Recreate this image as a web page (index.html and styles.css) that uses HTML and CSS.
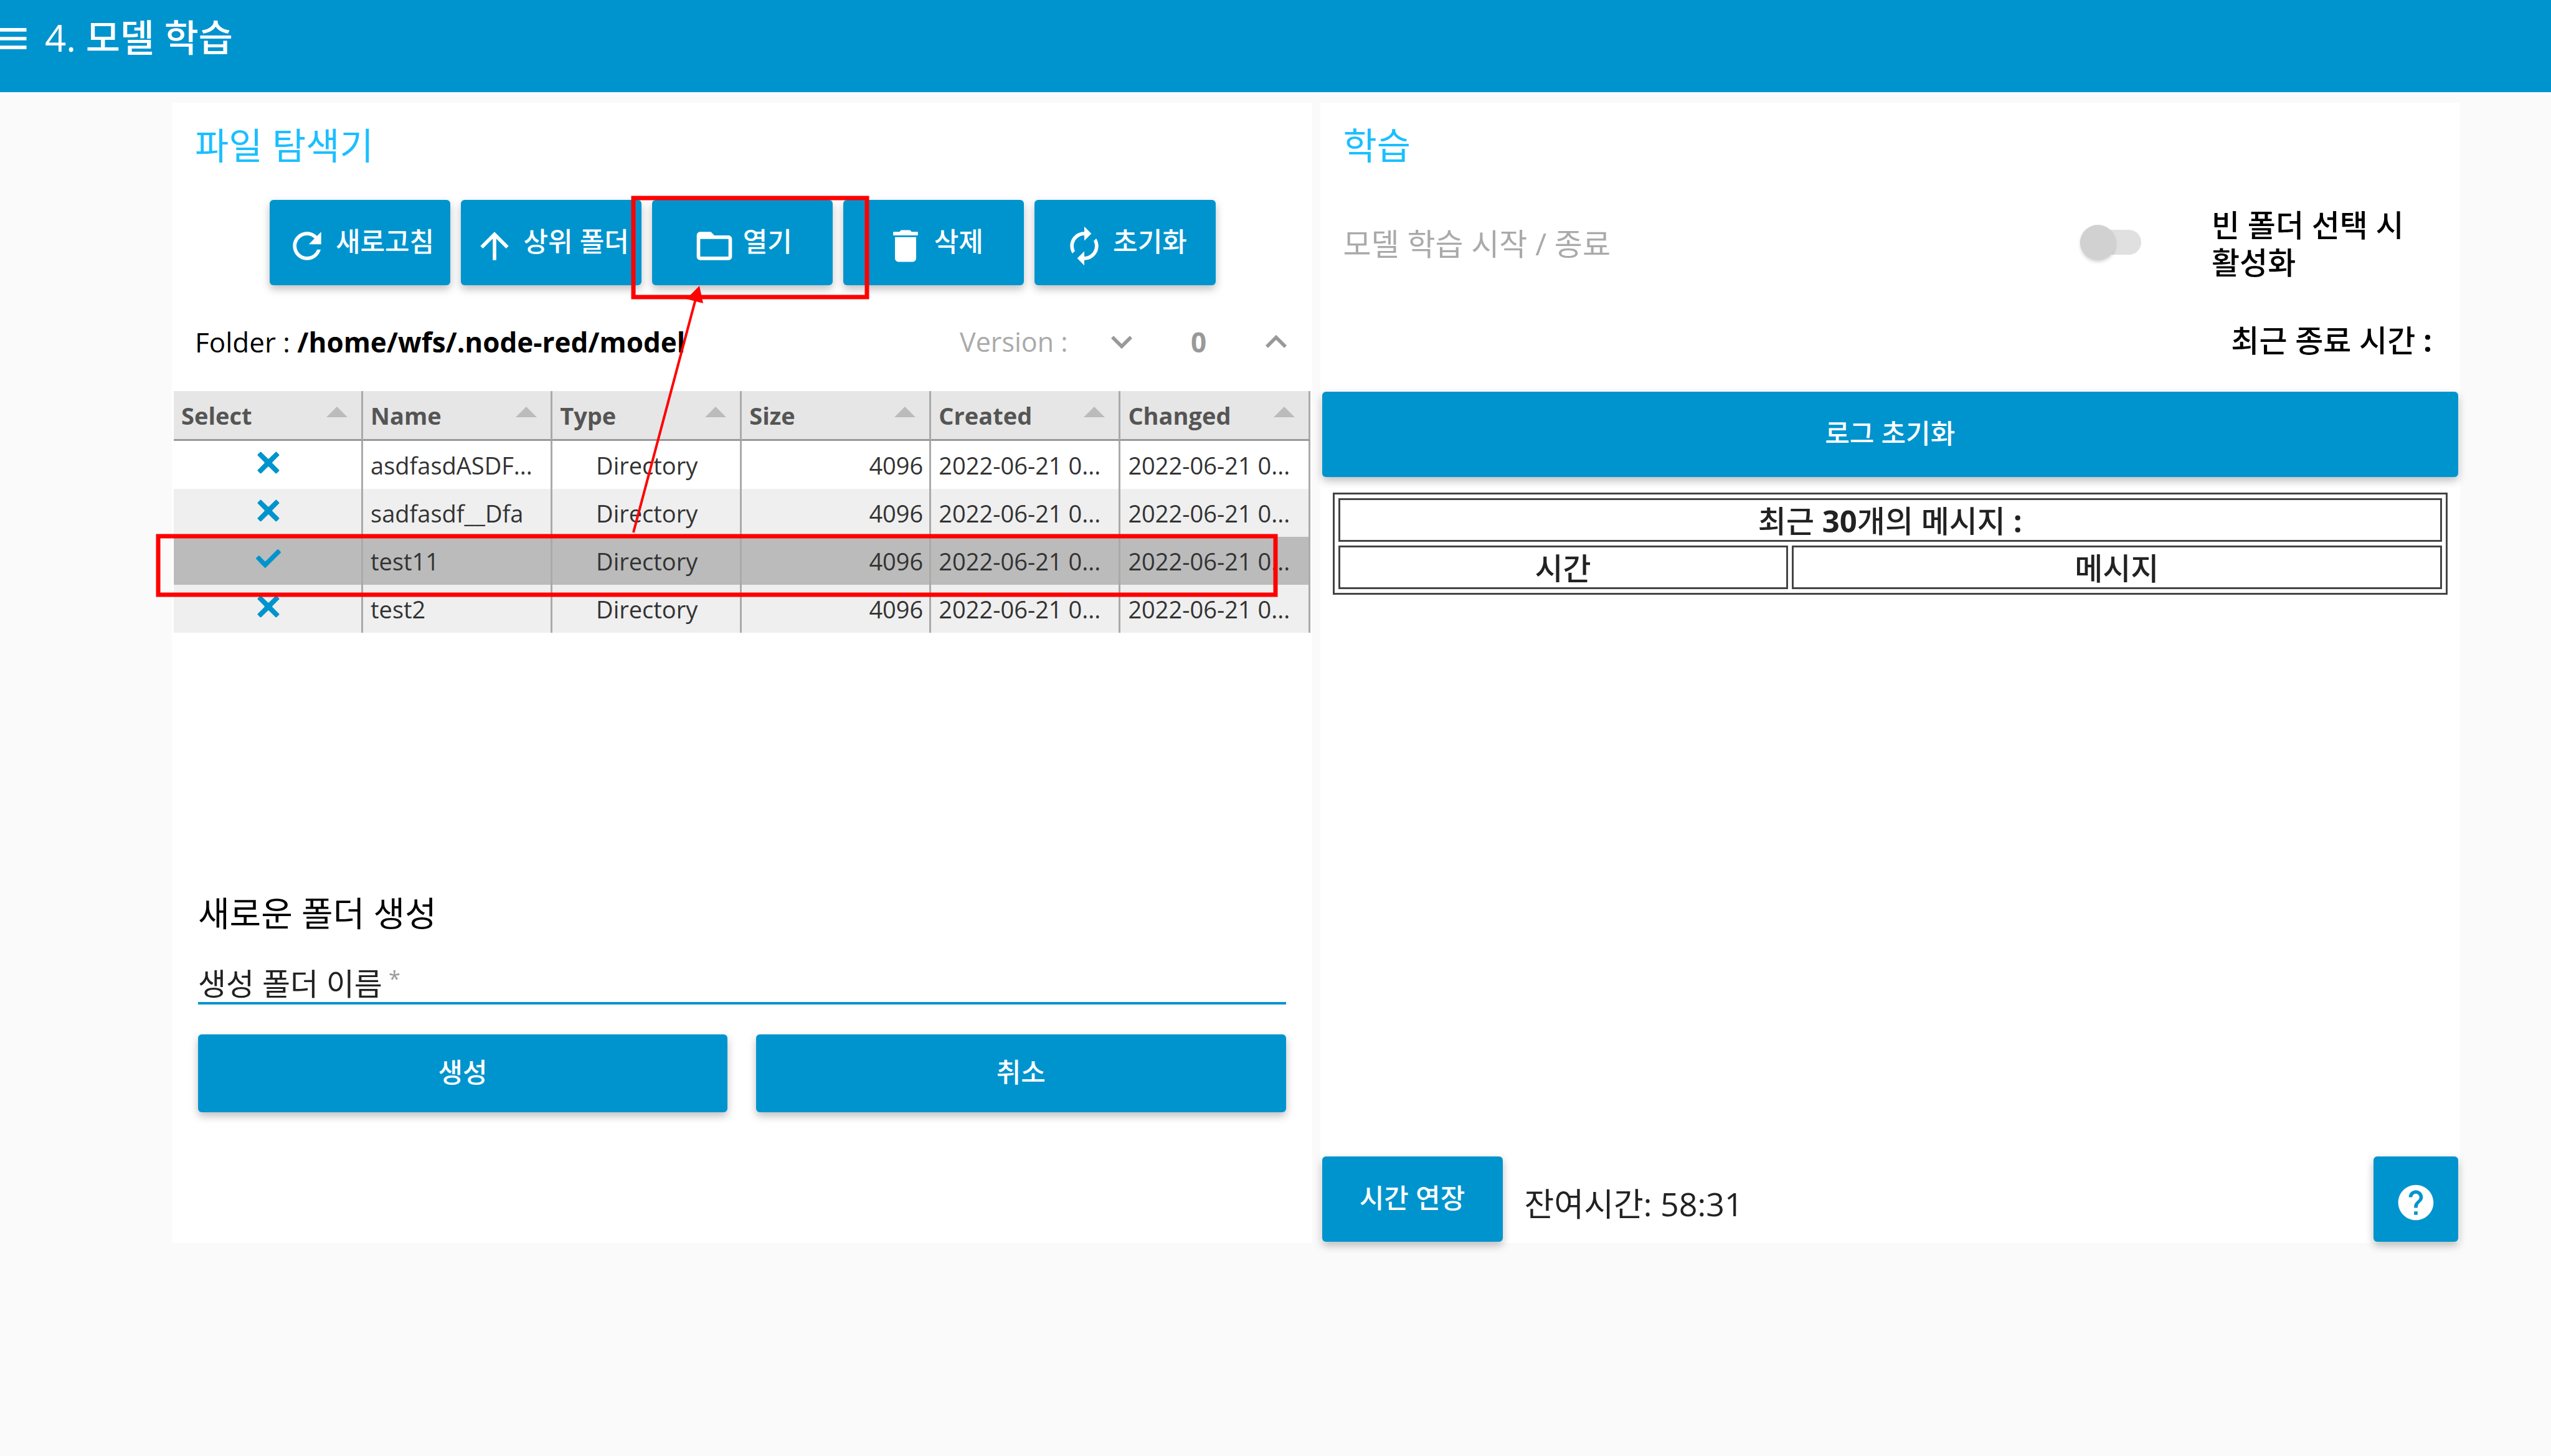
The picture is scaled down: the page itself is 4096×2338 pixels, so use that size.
FILE: index.html
```html
<!DOCTYPE html>
<html lang="ko">
<head>
<meta charset="utf-8">
<title>4. 모델 학습</title>
<link rel="stylesheet" href="styles.css">
</head>
<body>
<header class="topbar">
  <button class="menu-button" type="button" aria-label="메뉴">
    <svg class="menu-icon" viewBox="6 0 18 24"><path d="M3 18h18v-2H3v2zm0-5h18v-2H3v2zm0-7v2h18V6H3z"/></svg>
  </button>
  <h1 class="topbar-title">4. 모델 학습</h1>
</header>

<main class="dashboard">
  <section class="card">
    <h2 class="card-title">파일 탐색기</h2>
    <div class="toolbar">
      <button class="btn" type="button"><svg class="icon" viewBox="0 0 24 24"><path d="M17.65 6.35C16.2 4.9 14.21 4 12 4c-4.42 0-7.99 3.58-7.99 8s3.57 8 7.99 8c3.73 0 6.84-2.55 7.73-6h-2.08c-.82 2.33-3.04 4-5.65 4-3.31 0-6-2.69-6-6s2.69-6 6-6c1.66 0 3.14.69 4.22 1.78L13 11h7V4l-2.35 2.35z"/></svg>새로고침</button>
      <button class="btn" type="button"><svg class="icon" viewBox="0 0 24 24"><path d="M4 12l1.41 1.41L11 7.83V20h2V7.83l5.58 5.59L20 12l-8-8-8 8z"/></svg>상위 폴더</button>
      <button class="btn" type="button"><svg class="icon" viewBox="0 0 24 24"><path d="M20 6h-8l-2-2H4c-1.1 0-1.99.9-1.99 2L2 18c0 1.1.9 2 2 2h16c1.1 0 2-.9 2-2V8c0-1.1-.9-2-2-2zm0 12H4V8h16v10z"/></svg>열기</button>
      <button class="btn" type="button"><svg class="icon" viewBox="0 0 24 24"><path d="M6 19c0 1.1.9 2 2 2h8c1.1 0 2-.9 2-2V7H6v12zM19 4h-3.5l-1-1h-5l-1 1H5v2h14V4z"/></svg>삭제</button>
      <button class="btn" type="button"><svg class="icon" viewBox="0 0 24 24"><path d="M12 6v3l4-4-4-4v3c-4.42 0-8 3.58-8 8 0 1.57.46 3.03 1.24 4.26L6.7 14.8c-.45-.83-.7-1.79-.7-2.8 0-3.31 2.69-6 6-6zm6.76 1.74L17.3 9.2c.44.84.7 1.79.7 2.8 0 3.31-2.69 6-6 6v-3l-4 4 4 4v-3c4.42 0 8-3.58 8-8 0-1.57-.46-3.03-1.24-4.26z"/></svg>초기화</button>
    </div>

    <div class="path-row">
      <p class="path">Folder : <b>/home/wfs/.node-red/model</b></p>
      <div class="version">
        <label class="version-label" for="version">Version :</label>
        <button class="step" type="button" aria-label="이전 버전"><svg class="step-icon" viewBox="0 0 24 24"><path d="M16.59 8.59L12 13.17 7.41 8.59 6 10l6 6 6-6z"/></svg></button>
        <input class="version-value" id="version" type="text" value="0">
        <button class="step" type="button" aria-label="다음 버전"><svg class="step-icon" viewBox="0 0 24 24"><path d="M12 8l-6 6 1.41 1.41L12 10.83l4.59 4.58L18 14z"/></svg></button>
      </div>
    </div>

    <svg class="symbols" aria-hidden="true">
      <symbol id="cross" viewBox="0 0 24 24"><path d="M22.245,4.015c0.313,0.313,0.313,0.826,0,1.139l-6.276,6.27c-0.313,0.312-0.313,0.826,0,1.14l6.273,6.272c0.313,0.313,0.313,0.826,0,1.14l-2.285,2.277c-0.314,0.312-0.828,0.312-1.142,0l-6.271-6.271c-0.313-0.313-0.828-0.313-1.141,0l-6.276,6.267c-0.313,0.313-0.828,0.313-1.141,0l-2.282-2.28c-0.313-0.313-0.313-0.826,0-1.14l6.278-6.269c0.313-0.312,0.313-0.826,0-1.14L1.709,5.147c-0.314-0.313-0.314-0.827,0-1.14l2.284-2.278C4.308,1.417,4.821,1.417,5.135,1.73L11.405,8c0.314,0.314,0.828,0.314,1.141,0.001l6.276-6.267c0.312-0.312,0.826-0.312,1.141,0L22.245,4.015z"/></symbol>
      <symbol id="tick" viewBox="0 0 24 24"><path d="M21.652,3.211c-0.293-0.295-0.77-0.295-1.061,0L9.41,14.34c-0.293,0.297-0.771,0.297-1.062,0L3.449,9.351C3.304,9.203,3.114,9.13,2.923,9.129C2.73,9.128,2.534,9.201,2.387,9.351l-2.165,1.946C0.078,11.445,0,11.63,0,11.823c0,0.194,0.078,0.397,0.223,0.544l4.94,5.184c0.292,0.296,0.771,0.776,1.062,1.07l2.124,2.141c0.292,0.293,0.769,0.293,1.062,0l14.366-14.34c0.293-0.294,0.293-0.777,0-1.071L21.652,3.211z"/></symbol>
    </svg>
    <div class="file-area">
      <table class="files">
        <thead>
          <tr>
            <th><div class="head">Select<i class="sort"></i></div></th>
            <th><div class="head">Name<i class="sort"></i></div></th>
            <th><div class="head">Type<i class="sort"></i></div></th>
            <th><div class="head">Size<i class="sort"></i></div></th>
            <th><div class="head">Created<i class="sort"></i></div></th>
            <th><div class="head">Changed<i class="sort"></i></div></th>
          </tr>
        </thead>
        <tbody>
          <tr><td class="mark"><svg class="mark-icon"><use href="#cross"/></svg></td><td>asdfasdASDF...</td><td class="type">Directory</td><td class="size">4096</td><td>2022-06-21 0...</td><td>2022-06-21 0...</td></tr>
          <tr class="even"><td class="mark"><svg class="mark-icon"><use href="#cross"/></svg></td><td>sadfasdf__Dfa</td><td class="type">Directory</td><td class="size">4096</td><td>2022-06-21 0...</td><td>2022-06-21 0...</td></tr>
          <tr class="selected"><td class="mark"><svg class="mark-icon"><use href="#tick"/></svg></td><td>test11</td><td class="type">Directory</td><td class="size">4096</td><td>2022-06-21 0...</td><td>2022-06-21 0...</td></tr>
          <tr class="even"><td class="mark"><svg class="mark-icon"><use href="#cross"/></svg></td><td>test2</td><td class="type">Directory</td><td class="size">4096</td><td>2022-06-21 0...</td><td>2022-06-21 0...</td></tr>
        </tbody>
      </table>
    </div>

    <form class="new-folder">
      <h3 class="form-title">새로운 폴더 생성</h3>
      <div class="field">
        <input class="field-input" id="folder-name" type="text">
        <label class="field-label" for="folder-name">생성 폴더 이름<span class="required">*</span></label>
      </div>
      <div class="form-actions">
        <button class="btn" type="button">생성</button>
        <button class="btn" type="button">취소</button>
      </div>
    </form>
  </section>

  <section class="card">
    <h2 class="card-title">학습</h2>
    <div class="train-row">
      <label class="train-label" for="train">모델 학습 시작 / 종료</label>
      <input class="switch" id="train" type="checkbox">
      <p class="train-status">빈 폴더 선택 시 활성화</p>
    </div>
    <p class="last-end">최근 종료 시간 <b>:</b></p>
    <button class="btn log-reset" type="button">로그 초기화</button>
    <table class="log">
      <thead>
        <tr><th colspan="2">최근 <b>30</b>개의 메시지 <b>:</b></th></tr>
        <tr><th class="log-time">시간</th><th>메시지</th></tr>
      </thead>
    </table>
    <div class="session">
      <button class="btn extend" type="button">시간 연장</button>
      <p class="remaining">잔여시간: 58:31</p>
      <button class="btn help" type="button" aria-label="도움말"><svg class="icon" viewBox="0 0 24 24"><path d="M12 2C6.48 2 2 6.48 2 12s4.48 10 10 10 10-4.48 10-10S17.52 2 12 2zm1 17h-2v-2h2v2zm2.07-7.75l-.9.92C13.45 12.9 13 13.5 13 15h-2v-.5c0-1.1.45-2.1 1.17-2.83l1.24-1.26c.37-.36.59-.86.59-1.41 0-1.1-.9-2-2-2s-2 .9-2 2H8c0-2.21 1.79-4 4-4s4 1.79 4 4c0 .88-.36 1.68-.93 2.25z"/></svg></button>
    </div>
  </section>
</main>

<svg class="callouts" viewBox="0 0 4096 2338" aria-hidden="true">
  <rect x="1017" y="318" width="375" height="159"/>
  <rect x="254" y="861" width="1794" height="94"/>
  <line x1="1017" y1="855" x2="1117" y2="480"/>
  <polygon points="1123,459 1102,480 1129,487"/>
</svg>
</body>
</html>
```
FILE: styles.css
```css
* {
  box-sizing: border-box;
}

body {
  margin: 0;
  position: relative;
  min-height: 100vh;
  background: #fafafa;
  color: #000;
  font-family: "Open Sans", "Noto Sans CJK KR", sans-serif;
  font-size: 49px;
  line-height: 60px;
}

h1, h2, h3, p {
  margin: 0;
  font-weight: 400;
}

button, input {
  margin: 0;
  border: 0;
  padding: 0;
  background: none;
  color: inherit;
  font: inherit;
}

svg {
  display: block;
  fill: currentColor;
}

.symbols {
  display: none;
}

/* Top bar */
.topbar {
  display: flex;
  align-items: flex-start;
  gap: 21px;
  height: 148px;
  padding-top: 24px;
  background: #0094ce;
  color: #fff;
}

.menu-button {
  padding-top: 4px;
}

.menu-icon {
  width: 51px;
  height: 68px;
}

.topbar-title {
  font-size: 60px;
  font-weight: 500;
  line-height: 72px;
}

/* Cards */
.dashboard {
  display: grid;
  grid-template-columns: 1fr 1fr;
  gap: 13px;
  padding: 17px 146px 0 276px;
}

.card {
  display: flex;
  flex-direction: column;
  min-height: 1831px;
  padding: 32px 3px 2px;
  background: #fff;
}

.card-title {
  padding-left: 34px;
  color: #1bbfff;
  font-size: 59px;
  line-height: 72px;
}

.btn {
  display: flex;
  align-items: center;
  justify-content: center;
  gap: 12px;
  height: 137px;
  padding-bottom: 4px;
  border-radius: 6px;
  background: #0094ce;
  box-shadow: 0 6px 14px rgba(0, 0, 0, 0.26);
  color: #fff;
  font-size: 43px;
  font-weight: 500;
  white-space: nowrap;
}

.icon {
  flex: none;
  width: 68px;
  height: 68px;
  margin-top: 14px;
}

/* File browser */
.toolbar {
  display: grid;
  grid-template-columns: repeat(5, 1fr);
  gap: 17px;
  margin-top: 52px;
  padding: 0 152px 0 154px;
}

.path-row {
  display: flex;
  align-items: center;
  justify-content: space-between;
  margin-top: 57px;
  padding: 0 21px 0 34px;
  font-size: 44px;
}

.version {
  display: flex;
  align-items: center;
  color: #999;
}

.version-label {
  margin-right: 52px;
  color: #aaa;
  font-size: 43px;
}

.step-icon {
  width: 68px;
  height: 68px;
}

.version-value {
  width: 180px;
  font-weight: 700;
  text-align: center;
}

.file-area {
  min-height: 802px;
  margin-top: 45px;
}

.files {
  width: 100%;
  border-collapse: separate;
  border-spacing: 0;
  table-layout: fixed;
  color: #333;
  font-size: 38px;
}

.files th,
.files td {
  height: 77px;
  padding: 0 10px 0 12px;
  border-right: 3px solid #aaa;
  overflow: hidden;
  text-align: left;
  white-space: nowrap;
}

.files th {
  height: 80px;
  border-bottom: 3px solid #999;
  background: #e6e6e6;
  color: #555;
}

.head {
  display: flex;
  align-items: center;
  justify-content: space-between;
}

.sort {
  margin: 0 12px 10px 0;
  border: 17px solid transparent;
  border-top: 0;
  border-bottom-color: #bbb;
}

.even {
  background: #efefef;
}

.selected {
  background: #bbb;
}

.mark-icon {
  width: 40px;
  height: 40px;
  margin: 0 auto 8px;
  color: #0094ce;
}

.files .type {
  text-align: center;
}

.files .size {
  text-align: right;
}

/* New folder form */
.new-folder {
  padding: 0 39px;
}

.form-title {
  font-size: 55px;
  line-height: 72px;
}

.field {
  display: grid;
  margin-top: 47px;
}

.field-input,
.field-label {
  grid-area: 1 / 1;
}

.field-input {
  width: 100%;
  height: 64px;
  border-bottom: 4px solid #0094ce;
}

.field-label {
  color: #222;
}

.required {
  margin-left: 10px;
  color: #999;
  font-size: 34px;
  line-height: 44px;
  vertical-align: top;
}

.form-actions {
  display: grid;
  grid-template-columns: 1fr 1fr;
  gap: 46px;
  margin-top: 48px;
}

.form-actions .btn {
  height: 125px;
}

/* Training */
.train-row {
  display: grid;
  grid-template-columns: 1fr 98px 360px;
  align-items: center;
  column-gap: 113px;
  margin-top: 62px;
  padding: 0 36px 0 34px;
}

.train-label {
  color: #aaa;
}

.switch {
  appearance: none;
  display: flex;
  align-items: center;
  width: 98px;
  height: 40px;
  margin-bottom: 4px;
  border-radius: 20px;
  background: #e0e0e0;
}

.switch::before {
  content: "";
  width: 57px;
  height: 57px;
  flex: none;
  border-radius: 50%;
  background: #d1d1d1;
  box-shadow: 0 3px 5px rgba(0, 0, 0, 0.15);
}

.train-status,
.last-end {
  font-weight: 500;
  word-break: keep-all;
}

.last-end {
  margin-top: 65px;
  padding-right: 42px;
  text-align: right;
}

.log-reset {
  margin-top: 53px;
}

.log {
  margin: 25px 17px 0;
  border: 3px solid #444;
  border-collapse: separate;
  border-spacing: 6px;
  table-layout: fixed;
  color: #222;
}

.log th {
  height: 70px;
  padding: 2px 0 0;
  border: 3px solid #444;
  font-weight: 500;
}

.log .log-time {
  width: 722px;
}

.session {
  display: flex;
  align-items: center;
  margin-top: auto;
}

.extend {
  width: 290px;
}

.remaining {
  padding: 14px 0 0 35px;
  color: #222;
  font-size: 52px;
}

.help {
  width: 136px;
  margin-left: auto;
}

/* Red guide marks drawn over the page */
.callouts {
  position: absolute;
  top: 0;
  left: 0;
  width: 100%;
  pointer-events: none;
  fill: none;
  stroke: #f00;
}

.callouts rect {
  stroke-width: 7px;
}

.callouts line {
  stroke-width: 4px;
}

.callouts polygon {
  fill: #f00;
  stroke: none;
}
```
